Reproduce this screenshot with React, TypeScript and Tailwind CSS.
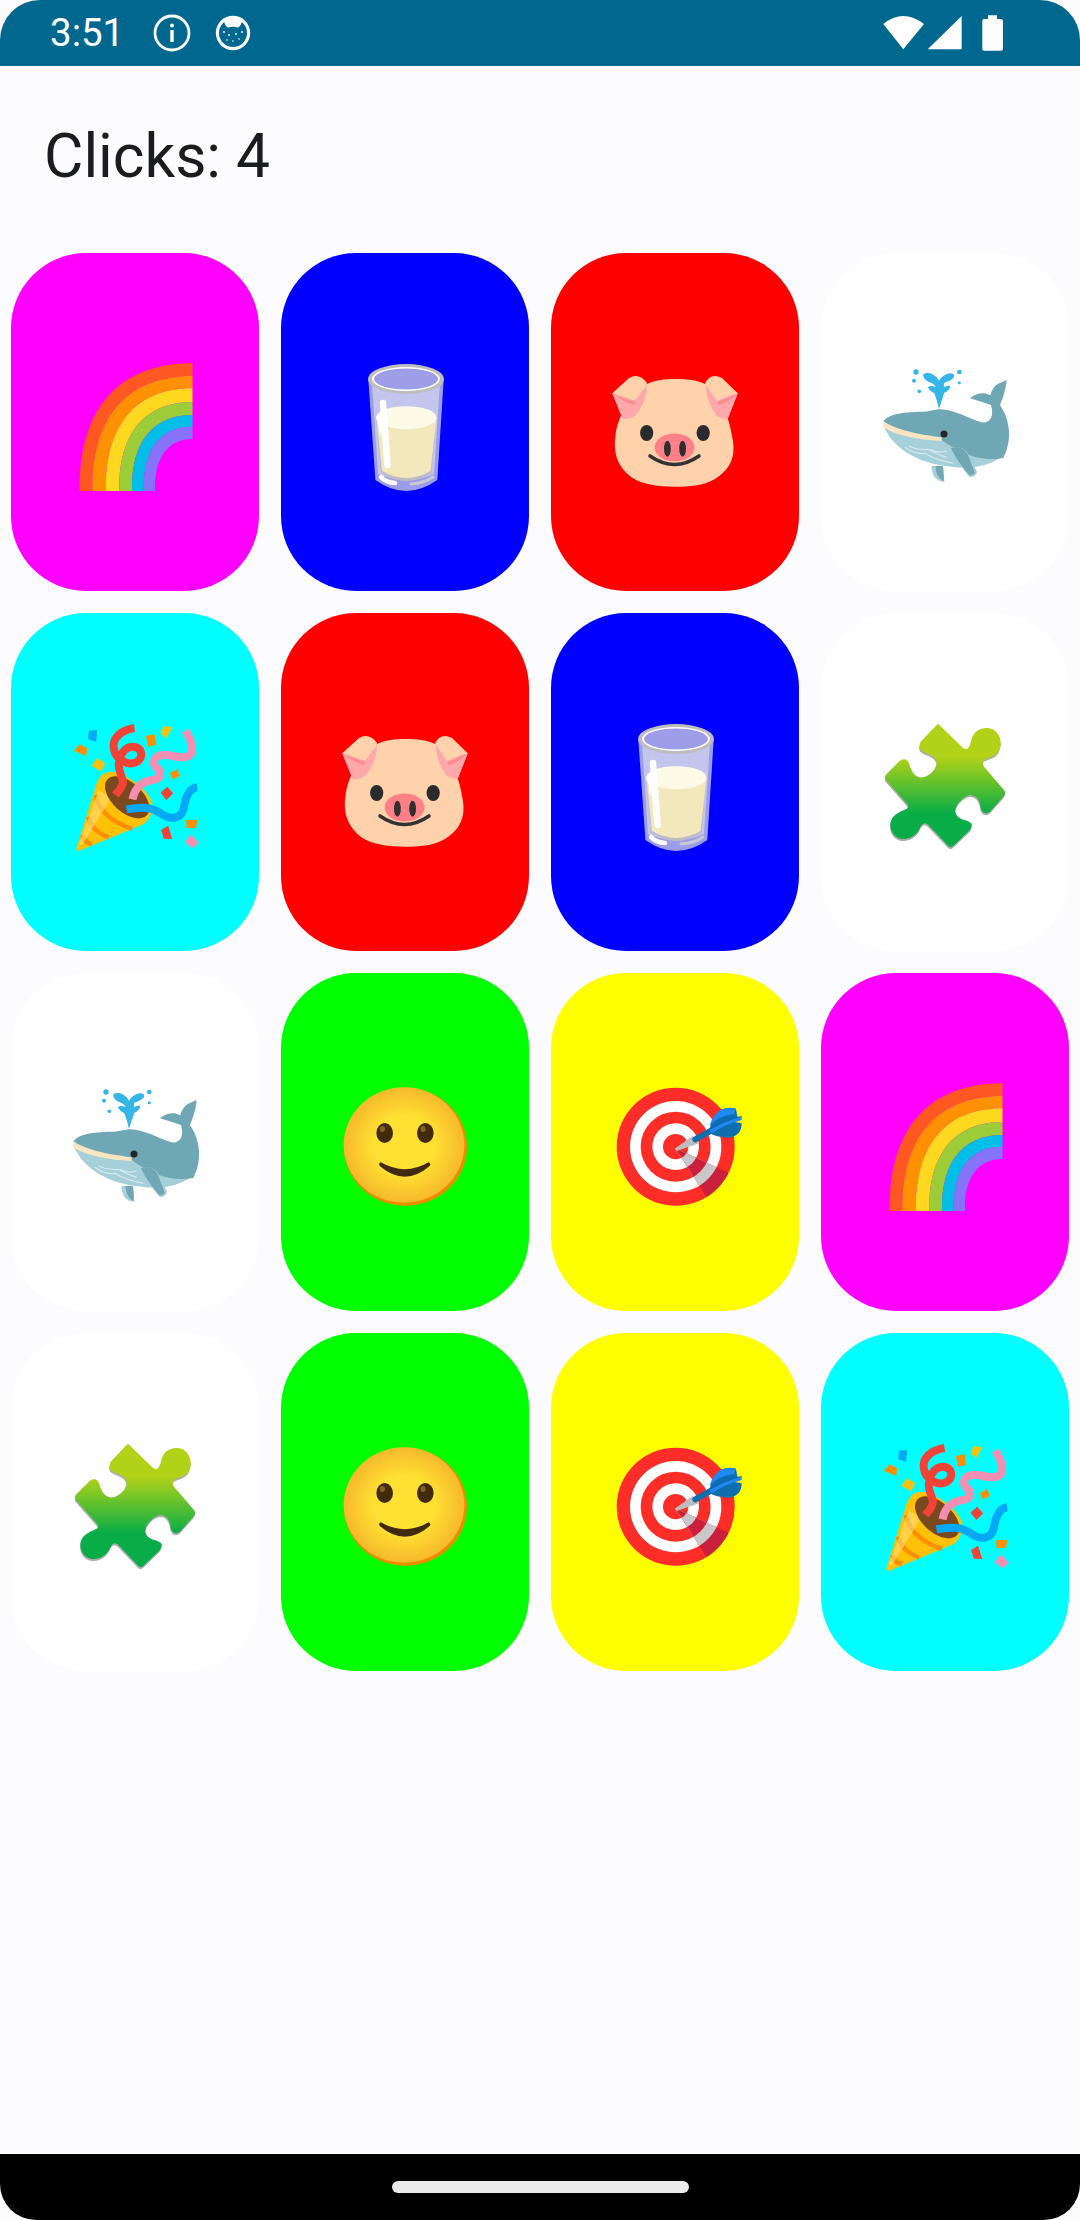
const PUZZLE_PATH =
  'M355 372 L430 445 Q445 455 453 425 C458 395 480 382 505 384 C535 388 548 420 540 445 C532 470 510 472 495 478 Q482 485 492 500 L552 570 Q560 580 550 590 L510 635 Q490 648 482 625 C480 600 470 585 450 585 C430 588 405 615 406 635 C410 660 440 658 452 668 Q460 675 450 690 L400 738 Q392 745 385 738 L325 675 Q312 662 302 680 C290 710 265 718 245 717 C220 712 208 690 212 665 C220 640 250 632 262 625 Q268 618 258 608 L198 540 Q192 530 200 522 L240 482 Q260 470 268 492 C275 520 290 535 310 532 C330 528 352 505 350 485 C345 462 315 462 302 450 Q295 440 302 425 L350 375 Q353 371 355 372 Z'

function Rainbow() {
  const xs = [14.7, 27.4, 40.9, 54.3, 67, 78.7, 90]
  const ys = [11.3, 24, 36.3, 50, 63, 74.7, 87]
  const colors = ['#FF5722', '#FF9100', '#FDD81F', '#9CCC37', '#00BEE8', '#8573F8']
  const arc = (x: number, y: number) => {
    const rx = 127.5 - x
    const ry = 139 - y
    return `C${x - 1} ${139 - ry * 0.65} ${127.5 - rx * 0.65} ${y} 127.5 ${y}`
  }
  return (
    <svg viewBox="0 0 140 140" className="h-[140px] w-[140px]">
      {colors.map((color, i) => (
        <path
          key={color}
          fill={color}
          d={`M${xs[i]} 139 ${arc(xs[i], ys[i])} L127.5 ${ys[i + 1]} C${127.5 - (127.5 - xs[i + 1]) * 0.65} ${ys[i + 1]} ${xs[i + 1] - 1} ${139 - (139 - ys[i + 1]) * 0.65} ${xs[i + 1]} 139 Z`}
        />
      ))}
    </svg>
  )
}

function Milk() {
  return (
    <svg viewBox="0 0 140 140" className="h-[140px] w-[140px]">
      <path d="M33.3 27 L40.4 128 Q71 150 102.3 128 L108.7 27 Z" fill="#9C9DE8" />
      <path d="M37 30 L43 122 Q71 134 99 122 L105 30 Z" fill="#C3C5EC" />
      <ellipse cx="71" cy="27" rx="38" ry="15" fill="#BDBDBD" />
      <ellipse cx="71" cy="27" rx="34" ry="12" fill="#FFFFFF" />
      <ellipse cx="71" cy="27" rx="32" ry="10.5" fill="#9E9EE8" />
      <path d="M41 66 L46 121 Q71 137 96.5 121 L101.6 66 Z" fill="#BDBDC6" />
      <path d="M41.4 66 L47 119 Q71 133 95.5 119 L101.6 66 Z" fill="#F1E8BC" />
      <ellipse cx="71.3" cy="65.7" rx="30.3" ry="11.5" fill="#FDFAE7" />
      <path d="M48 51 L52.5 113" stroke="#FFFFFF" strokeWidth="6.5" strokeLinecap="round" />
      <path d="M47 65 L49 80" stroke="#FFFFFF" strokeWidth="9" strokeLinecap="round" />
      <path d="M46 125 Q50 130 60 131" stroke="#FFFFFF" strokeWidth="4.5" strokeLinecap="round" fill="none" />
      <path d="M76 132 Q90 131 98 125" stroke="#C9C9D6" strokeWidth="3" strokeLinecap="round" fill="none" />
    </svg>
  )
}

function Pig() {
  return (
    <svg viewBox="0 0 140 140" className="h-[140px] w-[140px]">
      <path d="M7.3 41.3 L24 26 Q34 20 42 31 L30 66 Q22 68 17.6 66 Z" fill="#FFD2AC" />
      <path d="M132.7 41.3 L117 26 Q106 20 100 31 L110 66 Q118 68 123 66 Z" fill="#FFD2AC" />
      <path d="M70 27 C84 27 94 28 104 34 C116 48 124 64 127 84 C132 106 124 118 110 127 C98 134 84 134.7 70 134.7 C54 134.7 38 133 26 125 C12 114 8 100 10.5 84 C12 66 24 46 42 32 C50 28 60 27 70 27 Z" fill="#FFD2AC" />
      <path d="M7.3 41.3 Q18 44 30 49 Q36 40 42 33 Q42 50 30 64 Q24 68 17.6 67 Z" fill="#FFA8AC" />
      <path d="M8 41.5 Q18 47 31 50 L29 53 Q18 50 8 41.5 Z" fill="#FF8A8E" />
      <path d="M132.7 41.3 Q122 44 112 49 Q106 40 101 33 Q101 50 112 64 Q118 68 123 66 Z" fill="#FFA8AC" />
      <path d="M132 41.5 Q122 47 112 50 L114 53 Q124 50 132 41.5 Z" fill="#FF8A8E" />
      <ellipse cx="41.7" cy="81" rx="6.6" ry="8" fill="#2B2B2D" />
      <ellipse cx="98.2" cy="81" rx="6.6" ry="8" fill="#2B2B2D" />
      <path d="M45 104 Q69.5 121 94 104" stroke="#333333" strokeWidth="3.6" strokeLinecap="round" fill="none" />
      <ellipse cx="69.6" cy="95.5" rx="20" ry="14" fill="#FF8187" />
      <ellipse cx="62.4" cy="96.7" rx="3.4" ry="8" fill="#2F2F2F" />
      <ellipse cx="77.6" cy="96.7" rx="3.4" ry="8" fill="#2F2F2F" />
    </svg>
  )
}

function Whale() {
  return (
    <svg viewBox="0 -24 420 420" className="h-[140px] w-[140px]">
      <path d="M170 318 C168 345 185 366 208 365 L204 318 Z" fill="#A5CFD9" />
      <path d="M182 318 C181 340 192 358 207 363 L204 318 Z" fill="#6FA7B4" />
      <path d="M25 195 C50 260 120 310 230 320 C300 330 370 310 392 275 L200 230 Z" fill="#A5CFD9" />
      <path d="M25 185 C40 160 90 155 150 155 L190 148 C230 145 280 175 320 187 C345 190 358 170 348 135 Q318 125 285 115 Q305 98 330 100 L346 106 Q352 82 368 72 L395 60 Q392 95 375 135 C395 165 408 205 400 250 Q395 275 385 294 C320 305 260 285 200 240 C130 235 60 225 25 185 Z" fill="#6FA7B4" />
      <path d="M25 183 C70 215 150 225 200 232 L200 243 C130 240 60 225 30 205 Q24 195 25 183 Z" fill="#FBE5C0" />
      <circle cx="207" cy="222" r="10.500" fill="#262626" />
      <path d="M90 262 Q120 285 150 280 Q180 300 235 310 M100 258 Q130 272 160 268 Q190 285 215 292 M165 268 Q190 282 215 272" stroke="#D5E9EE" strokeWidth="3.5" fill="none" />
      <path d="M228 265 C250 258 268 262 282 285 L306 335 Q302 350 285 352 C265 330 245 300 228 265 Z" fill="#A5CFD9" />
      <path d="M228 265 C250 258 266 262 279 285 L300 340 Q292 346 283 346 C265 325 245 300 228 265 Z" fill="#6FA7B4" />
      <path d="M192 147 Q186 120 178 100 Q165 95 158 82 Q168 72 182 82 Q178 70 160 65 Q142 55 145 42 Q165 32 185 52 L192 62 Q205 42 225 40 Q240 40 237 52 Q225 65 208 68 Q205 75 207 82 Q220 72 226 80 Q222 92 208 98 Q200 120 192 147 Z" fill="#35B5E8" />
      <circle cx="123" cy="36" r="8" fill="#35B5E8" />
      <circle cx="117" cy="62" r="6" fill="#35B5E8" />
      <circle cx="133" cy="94" r="5.500" fill="#35B5E8" />
      <circle cx="253" cy="36" r="7" fill="#35B5E8" />
      <circle cx="253" cy="68" r="4.500" fill="#35B5E8" />
    </svg>
  )
}

function Party() {
  return (
    <svg viewBox="193.5 336 420 420" className="h-[140px] w-[140px]">
      <path d="M228 745 L290 545 Q305 515 330 515 C380 520 445 570 455 610 Q458 650 430 672 L240 751 Q226 756 228 745 Z" fill="#FFC107" />
      <path d="M285 585 Q300 655 395 687 M262 650 Q275 695 325 712 M245 705 Q252 728 275 733" stroke="#FF8F00" strokeWidth="13" fill="none" />
      <path d="M235 735 L295 570 L325 590 L325 605 L245 735 Z" fill="#FFE082" opacity="0.55" />
      <ellipse cx="380" cy="592" rx="80" ry="45" transform="rotate(42 380 592)" fill="#7A4A1E" />
      <g fill="none" strokeWidth="24">
        <path d="M402 384 C360 390 335 415 340 445 C345 480 385 500 410 485 C430 470 425 440 395 440 C375 440 360 460 355 490 C352 520 375 540 365 555 C360 570 350 578 345 585" stroke="#F44336" />
        <path d="M396 598 C405 555 430 545 455 540 C490 535 480 510 465 500 C450 480 470 462 500 465 C530 470 575 485 575 445 C575 425 565 410 555 392" stroke="#F48FB1" />
        <path d="M378 628 C420 620 450 620 480 640 C510 660 540 660 550 625 C555 590 565 565 590 562" stroke="#03A9F4" />
      </g>
      <polygon points="265,392 290,390 287,426 263,418" fill="#03A9F4" />
      <polygon points="220,452 238,433 260,445 257,468" fill="#FF8F00" />
      <polygon points="273,497 290,475 314,490 302,514" fill="#FFC107" />
      <polygon points="436,408 462,402 468,434 443,440" fill="#FF8F00" />
      <polygon points="480,400 490,378 516,382 497,414" fill="#FFC107" />
      <polygon points="508,520 530,507 538,528 516,538" fill="#FF8F00" />
      <polygon points="480,578 500,560 518,580 498,600" fill="#F44336" />
      <polygon points="557,660 591,660 586,685 558,683" fill="#FF8F00" />
      <polygon points="482,690 503,677 515,717 490,716" fill="#F44336" />
      <polygon points="553,725 572,703 595,728 575,745" fill="#F48FB1" />
    </svg>
  )
}

function Puzzle() {
  return (
    <svg viewBox="165 336 420 420" className="h-[140px] w-[140px]">
      <defs>
        <linearGradient id="puzzleFill" gradientUnits="userSpaceOnUse" x1="0" y1="470" x2="0" y2="640">
          <stop offset="0" stopColor="#B1D216" />
          <stop offset="1" stopColor="#09AD47" />
        </linearGradient>
      </defs>
      <path d={PUZZLE_PATH} fill="#ADADAD" transform="translate(-1 6)" />
      <path d={PUZZLE_PATH} fill="url(#puzzleFill)" />
    </svg>
  )
}

function Smile() {
  return (
    <svg viewBox="165 96 420 420" className="h-[140px] w-[140px]">
      <defs>
        <radialGradient id="smileFill" cx="0.5" cy="0.5" r="0.5">
          <stop offset="0.5" stopColor="#FFE033" />
          <stop offset="1" stopColor="#F6B92B" />
        </radialGradient>
      </defs>
      <ellipse cx="376" cy="320" rx="185" ry="177" fill="#EB8F00" />
      <ellipse cx="372" cy="315" rx="181" ry="173" fill="url(#smileFill)" />
      <ellipse cx="314" cy="279" rx="25" ry="30" fill="#422B0D" />
      <ellipse cx="436" cy="279" rx="25" ry="30" fill="#422B0D" />
      <ellipse cx="307" cy="267" rx="8" ry="9" fill="#896024" />
      <ellipse cx="429" cy="267" rx="8" ry="9" fill="#896024" />
      <path d="M302 367 Q375 408 446 367 Q454 372 449 378 Q375 442 299 378 Q295 370 302 367 Z" fill="#422B0D" />
    </svg>
  )
}

function Target() {
  return (
    <svg viewBox="975 96 420 420" className="h-[140px] w-[140px]">
      <defs>
        <clipPath id="targetWedge">
          <polygon points="1187,325 1360,405 1285,480" />
        </clipPath>
      </defs>
      <circle cx="1187" cy="320" r="177" fill="#FF2D27" />
      <circle cx="1187" cy="320" r="137" fill="#FFFFFF" />
      <circle cx="1187" cy="320" r="105" fill="#FF2D27" />
      <circle cx="1187" cy="320" r="70" fill="#FFFFFF" />
      <circle cx="1187" cy="320" r="38" fill="#FF2D27" />
      <g clipPath="url(#targetWedge)">
        <circle cx="1187" cy="320" r="177" fill="#CC1F3C" />
        <circle cx="1187" cy="320" r="137" fill="#C8C8C8" />
        <circle cx="1187" cy="320" r="105" fill="#CC1F3C" />
        <circle cx="1187" cy="320" r="70" fill="#C8C8C8" />
        <circle cx="1187" cy="320" r="38" fill="#CC1F3C" />
      </g>
      <polygon points="1184,326 1238,288 1258,310 1190,333" fill="#BDBDBD" />
      <path d="M1246 298 L1300 268" stroke="#0E6DAE" strokeWidth="18" strokeLinecap="round" />
      <path d="M1290 262 Q1300 222 1325 208 Q1350 200 1368 206 L1372 230 L1388 228 L1360 245 L1385 250 Q1385 285 1350 293 Q1315 294 1290 280 Z" fill="#0E6DAE" />
      <path d="M1288 258 Q1300 222 1325 208 Q1345 202 1368 206 Q1365 215 1362 222 Q1320 225 1288 258 Z" fill="#1E88F5" />
      <path d="M1295 280 Q1330 255 1385 240 L1385 230 Q1330 245 1290 270 Z" fill="#1E88F5" />
    </svg>
  )
}

const tiles = [
  { color: 'bg-[#ff00ff]', Icon: Rainbow },
  { color: 'bg-[#0000ff]', Icon: Milk },
  { color: 'bg-[#ff0000]', Icon: Pig },
  { color: 'bg-white', Icon: Whale },
  { color: 'bg-[#00ffff]', Icon: Party },
  { color: 'bg-[#ff0000]', Icon: Pig },
  { color: 'bg-[#0000ff]', Icon: Milk },
  { color: 'bg-white', Icon: Puzzle },
  { color: 'bg-white', Icon: Whale },
  { color: 'bg-[#00ff00]', Icon: Smile },
  { color: 'bg-[#ffff00]', Icon: Target },
  { color: 'bg-[#ff00ff]', Icon: Rainbow },
  { color: 'bg-white', Icon: Puzzle },
  { color: 'bg-[#00ff00]', Icon: Smile },
  { color: 'bg-[#ffff00]', Icon: Target },
  { color: 'bg-[#00ffff]', Icon: Party },
]

function StatusBar() {
  return (
    <div className="flex h-[66px] items-center justify-between rounded-t-[40px] bg-[#00688f] pl-[50px] pr-[77px] text-white">
      <div className="flex items-center">
        <span className="text-[38.5px] leading-none">3:51</span>
        <svg viewBox="0 0 38 38" className="ml-[29px] h-[38px] w-[38px]">
          <circle cx="19" cy="19" r="17" fill="none" stroke="#fff" strokeWidth="2.8" />
          <circle cx="19" cy="11.5" r="2" fill="#fff" />
          <rect x="17.3" y="16" width="3.4" height="12" fill="#fff" />
        </svg>
        <svg viewBox="0 0 36 36" className="ml-[24px] h-[36px] w-[36px]">
          <circle cx="18" cy="18" r="17.2" fill="#fff" />
          <circle cx="18" cy="18" r="14" fill="#00688f" />
          <path d="M8 4 Q10 11 13 12.500 Q18 11 23 12.500 Q26 11 28 4 L18 1 Z" fill="#fff" />
          <g fill="#fff">
            <circle cx="9" cy="17" r="0.9" />
            <circle cx="14" cy="20" r="0.9" />
            <circle cx="21" cy="19" r="0.9" />
            <circle cx="27" cy="17" r="0.9" />
            <circle cx="12" cy="25" r="0.8" />
            <circle cx="18" cy="26" r="0.8" />
            <circle cx="24" cy="24" r="0.8" />
          </g>
        </svg>
      </div>
      <svg viewBox="0 0 120 36" className="h-[36px] w-[120px]">
        <path d="M0.3 9 Q20 -7 41 9 L20.3 34.3 Z" fill="#fff" />
        <path d="M78.7 1 V34.3 H44.7 Z" fill="#fff" />
        <path d="M105 0.3 H114 V4 H118 Q120 4 120 6 V34 Q120 35.7 118 35.7 H101 Q99.300 35.7 99.300 34 V6 Q99.300 4 101 4 H105 Z" fill="#fff" />
      </svg>
    </div>
  )
}

export default function App() {
  return (
    <div className="flex h-[2220px] w-[1080px] flex-col bg-[#fcfcff] font-['Roboto',sans-serif]">
      <StatusBar />
      <main className="flex-1">
        <div className="flex h-[187px] items-center px-[44px] pb-[5px]">
          <h1 className="text-[60.5px] font-normal leading-none text-[#1a1c1e]">Clicks: 4</h1>
        </div>
        <div className="grid grid-cols-4 gap-[22px] px-[11px]">
          {tiles.map(({ color, Icon }, index) => (
            <div key={index} className={`flex h-[338px] items-center justify-center rounded-[75px] ${color}`}>
              <Icon />
            </div>
          ))}
        </div>
      </main>
      <div className="flex h-[66px] items-start justify-center rounded-b-[36px] bg-black pt-[27px]">
        <div className="h-[12px] w-[297px] rounded-full bg-[#ebebeb]" />
      </div>
    </div>
  )
}
